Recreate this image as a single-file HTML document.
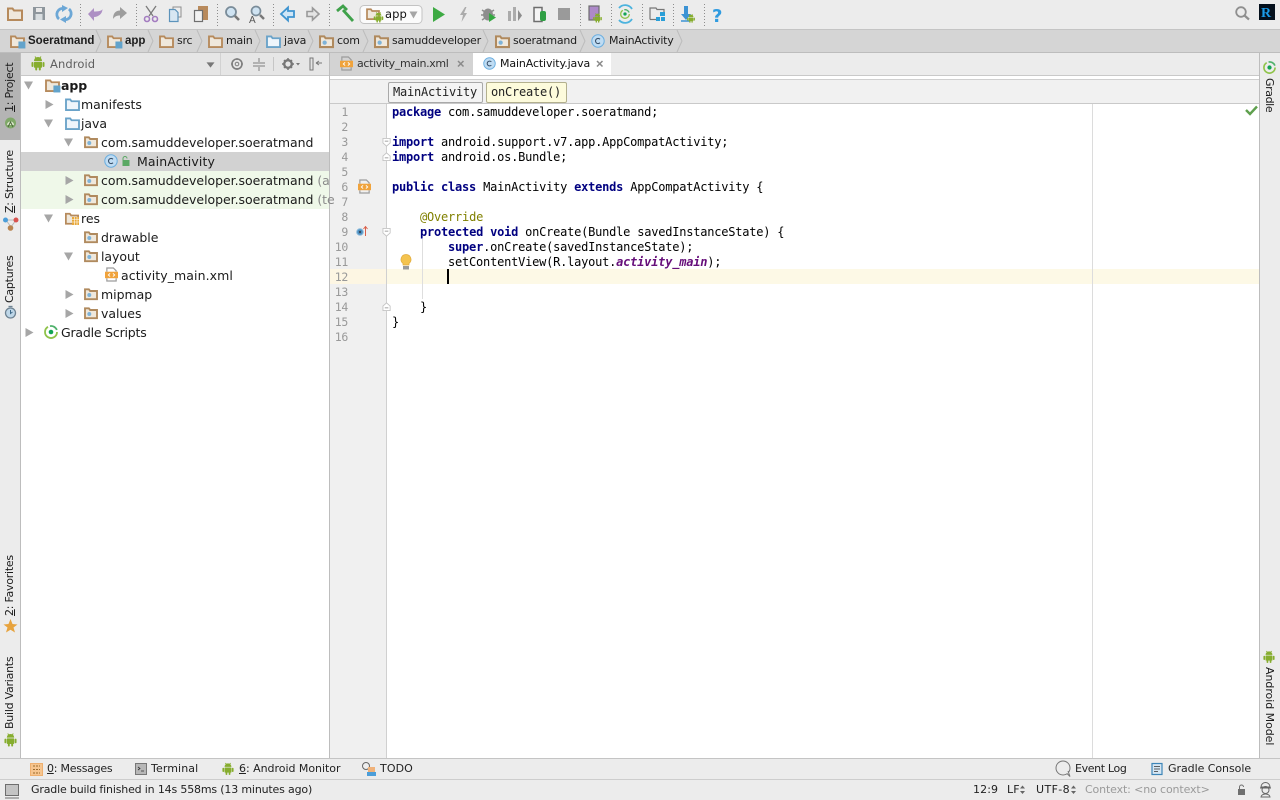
<!DOCTYPE html>
<html><head><meta charset="utf-8"><style>
html,body{margin:0;padding:0;width:1280px;height:800px;overflow:hidden;background:#fff}
body{position:relative;font-family:"DejaVu Sans","Liberation Sans",sans-serif;font-size:12px;color:#222}
.b{position:absolute}
.t{position:absolute;white-space:pre;line-height:16px;height:16px;letter-spacing:.1px}
.n{font-size:11px;letter-spacing:-.24px;color:#1d1d1d;top:33px}
.nb{font-family:"Liberation Sans",sans-serif;font-size:11.5px;letter-spacing:0;font-weight:bold}
.r{font-size:12.5px;letter-spacing:-.04px;color:#1b1b1b}
.u{text-decoration:underline}
.c{position:absolute;left:392px;font-family:"DejaVu Sans Mono",monospace;font-size:12px;letter-spacing:-.22px;line-height:15px;height:15px;white-space:pre;color:#000}
.c b{color:#000080}
.l{position:absolute;width:18px;left:330px;text-align:right;font-family:"DejaVu Sans Mono",monospace;font-size:11.5px;letter-spacing:-.3px;line-height:15px;color:#999}
.v{position:absolute;white-space:pre;font-size:11px;letter-spacing:-.25px;line-height:14px;color:#1b1b1b;transform-origin:0 0}
.vl{transform:rotate(-90deg)}
.vr{transform:rotate(90deg)}
.s{font-size:11px;color:#222;top:782px}
.bt{font-size:11px;color:#222;top:761px}
svg{position:absolute;left:0;top:0}
</style></head><body>
<div class="b" style="left:0;top:0;width:1280px;height:29px;background:#ececec"></div>
<div class="b" style="left:0;top:29px;width:1280px;height:1px;background:#c4c4c4"></div>
<div class="b" style="left:0;top:30px;width:1280px;height:22px;background:#d5d5d5"></div>
<div class="b" style="left:0;top:52px;width:1280px;height:1px;background:#bdbdbd"></div>
<!-- left strip -->
<div class="b" style="left:0;top:53px;width:20px;height:705px;background:#ececec"></div>
<div class="b" style="left:0;top:53px;width:20px;height:87px;background:#b4b4b4"></div>
<div class="b" style="left:20px;top:53px;width:1px;height:705px;background:#bdbdbd"></div>
<!-- project header -->
<div class="b" style="left:21px;top:53px;width:309px;height:22px;background:#e6e6e6"></div>
<div class="b" style="left:21px;top:75px;width:309px;height:1px;background:#c8c8c8"></div>
<div class="b" style="left:220px;top:53px;width:1px;height:22px;background:#d2d2d2"></div>
<div class="b" style="left:273px;top:57px;width:1px;height:14px;background:#c6c6c6"></div>
<!-- tree highlights -->
<div class="b" style="left:21px;top:152px;width:309px;height:19px;background:#d2d2d2"></div>
<div class="b" style="left:21px;top:171px;width:309px;height:38px;background:#eff8e9"></div>
<div class="b" style="left:329px;top:53px;width:1px;height:705px;background:#bdbdbd"></div>
<!-- tabs -->
<div class="b" style="left:330px;top:53px;width:930px;height:22px;background:#ececec"></div>
<div class="b" style="left:330px;top:53px;width:143px;height:22px;background:#d3d3d3"></div>
<div class="b" style="left:473px;top:53px;width:138px;height:23px;background:#fff"></div>
<div class="b" style="left:330px;top:75px;width:930px;height:1px;background:#c9c9c9"></div>
<div class="b" style="left:330px;top:76px;width:930px;height:3px;background:#fff"></div>
<div class="b" style="left:330px;top:79px;width:930px;height:1px;background:#cfcfcf"></div>
<div class="b" style="left:330px;top:80px;width:930px;height:23px;background:#f1f1f1"></div>
<div class="b" style="left:330px;top:103px;width:930px;height:1px;background:#c9c9c9"></div>
<!-- breadcrumbs -->
<div class="b" style="left:388px;top:82px;width:93px;height:19px;border:1px solid #a9a9a9;border-radius:2px;background:#f4f4f4"></div>
<div class="b" style="left:486px;top:82px;width:79px;height:19px;border:1px solid #b3b08e;border-radius:2px;background:#fdfbdc"></div>
<!-- gutter -->
<div class="b" style="left:330px;top:104px;width:56px;height:654px;background:#f0f0f0"></div>
<div class="b" style="left:386px;top:104px;width:1px;height:654px;background:#d0d0d0"></div>
<div class="b" style="left:330px;top:269px;width:56px;height:15px;background:#fdf6e3"></div>
<div class="b" style="left:387px;top:269px;width:872px;height:15px;background:#fdf9e6"></div>
<div class="b" style="left:1092px;top:104px;width:1px;height:654px;background:#dcdcdc"></div>
<div class="b" style="left:422px;top:239px;width:1px;height:60px;background:#dedede"></div>
<div class="b" style="left:447px;top:269px;width:2px;height:15px;background:#000"></div>
<!-- right strip -->
<div class="b" style="left:1259px;top:53px;width:1px;height:705px;background:#bdbdbd"></div>
<div class="b" style="left:1260px;top:53px;width:20px;height:705px;background:#ececec"></div>
<!-- bottom -->
<div class="b" style="left:0;top:758px;width:1280px;height:1px;background:#c4c4c4"></div>
<div class="b" style="left:0;top:759px;width:1280px;height:21px;background:#ececec"></div>
<div class="b" style="left:0;top:779px;width:1280px;height:1px;background:#cdcdcd"></div>
<div class="b" style="left:0;top:780px;width:1280px;height:20px;background:#ececec"></div>
<div class="b" style="left:30px;top:763px;width:13px;height:13px;background:#f6c58f;border:1px solid #eeb070;box-sizing:border-box"></div>

<svg width="1280" height="800" viewBox="0 0 1280 800" xmlns="http://www.w3.org/2000/svg">
<defs>
<symbol id="fo" viewBox="0 0 16 14" overflow="visible"><path d="M1 2V13H15V3.500H7L5.500 1.500H1Z" fill="#efe8dc" stroke="#b68a5c" stroke-width="2"/></symbol>
<symbol id="bl" viewBox="0 0 16 14" overflow="visible"><path d="M1 2V13H15V3.500H7L5.500 1.500H1Z" fill="#eef5fb" stroke="#6aa3c9" stroke-width="2"/></symbol>
<symbol id="pk" viewBox="0 0 16 14" overflow="visible"><path d="M1 2V13H15V3.500H7L5.500 1.500H1Z" fill="#efe8dc" stroke="#b08a5e" stroke-width="2.200"/><circle cx="6" cy="8.200" r="2.300" fill="#7eb3d8"/></symbol>
<symbol id="mo" viewBox="0 0 16 14" overflow="visible"><path d="M1 2V13H15V3.500H7L5.500 1.500H1Z" fill="#efe8dc" stroke="#b68a5c" stroke-width="2"/><rect x="9" y="7" width="7.500" height="7.500" fill="#62a3cb"/></symbol>
<symbol id="an" viewBox="0 0 14 15" overflow="visible"><g fill="#86ad2e"><path d="M3 5a4 4 0 0 1 8 0Z"/><rect x="3" y="5.800" width="8" height="6" rx=".8"/><rect x=".5" y="6" width="2" height="5" rx="1"/><rect x="11.500" y="6" width="2" height="5" rx="1"/><rect x="4.200" y="11" width="2" height="3.500" rx="1"/><rect x="7.800" y="11" width="2" height="3.500" rx="1"/></g><path d="M4 .5 5 2M10 .5 9 2" stroke="#86ad2e"/></symbol>
<symbol id="cl" viewBox="0 0 14 14" overflow="visible"><circle cx="7" cy="7" r="6.200" fill="#bfdcf3" stroke="#6aaee0"/><path d="M9 5.200A2.600 2.600 0 1 0 9 8.800" fill="none" stroke="#39506a" stroke-width="1.100"/></symbol>
<symbol id="xm" viewBox="0 0 14 16" overflow="visible"><path d="M2 5V1H9L12 4V5M2 12V15H12V12" fill="none" stroke="#9c9c9c" stroke-width="1.300"/><rect x="0" y="5" width="14" height="7" fill="#f0a33c"/><path d="M5.500 6.800 3.600 8.500 5.500 10.200M8.500 6.800 10.400 8.500 8.500 10.200" stroke="#fff" fill="none" stroke-width="1"/></symbol>
<symbol id="gr" viewBox="0 0 14 14" overflow="visible"><path d="M4 1.800A6 6 0 1 0 13 7" fill="none" stroke="#8fc34a" stroke-width="1.800"/><path d="M6 1.100A6 6 0 0 1 12.800 5" fill="none" stroke="#4fb16b" stroke-width="1.800"/><circle cx="7" cy="7" r="2.300" fill="#12a454"/></symbol>
<symbol id="dw" viewBox="0 0 9 9" overflow="visible"><path d="M0 .5H9L4.500 8.500Z" fill="#a6a6a6"/></symbol>
<symbol id="rt" viewBox="0 0 9 9" overflow="visible"><path d="M.5 0V9L8.500 4.500Z" fill="#a6a6a6"/></symbol>
<symbol id="dk" viewBox="0 0 9 9" overflow="visible"><path d="M0 1.500H9L4.500 7.500Z" fill="#777"/></symbol>
<symbol id="fd" viewBox="0 0 10 10" overflow="visible"><path d="M.5.5H8.500V5.500L4.500 9 .5 5.500Z" fill="#fff" stroke="#c4c4c4"/><path d="M2.500 3.500H6.500" stroke="#999"/></symbol>
<symbol id="fu" viewBox="0 0 10 10" overflow="visible"><path d="M.5 9.500H8.500V4.500L4.500 1 .5 4.500Z" fill="#fff" stroke="#c4c4c4"/><path d="M2.500 6.500H6.500" stroke="#999"/></symbol>
</defs>

<!-- separators -->
<g stroke="#8d8d8d" stroke-dasharray="1 2"><path d="M80.500 4V26M136.500 4V26M217.500 4V26M273.500 4V26M329.500 4V26M580.500 4V26M611.500 4V26M642.500 4V26M673.500 4V26M704.500 4V26"/></g>

<!-- toolbar icons -->
<use href="#fo" x="7" y="7" width="16" height="14"/>
<path d="M33 7H45V20H33Z" fill="#8e969c"/><rect x="36" y="8" width="6" height="4" fill="#e8e8e8"/><rect x="35.500" y="14" width="7" height="6" fill="#d8dde0"/>
<g fill="none" stroke="#6ca7d6" stroke-width="2.800"><path d="M59 19A6 6 0 0 1 64 8.500"/><path d="M69 9A6 6 0 0 1 64 19.500"/></g><path d="M62 5 68 8 62 12ZM66 16 60 19.500 66 23Z" fill="#6ca7d6"/>
<path d="M88 14 94 8V11.500C98 11.500 102 11 102.500 9 102.500 14 98 17 94 17V21Z" fill="#ad8fc4"/>
<path d="M127 13 120 7V10.500C116 10.500 113 13 113 19 115 16 117 15.500 120 15.500V19Z" fill="#9d9d9d"/>
<g fill="none" stroke="#7b7b7b" stroke-width="1.300"><path d="M146 6 153 16M156 6 149 16"/></g><g fill="none" stroke="#a37cc0" stroke-width="1.600"><circle cx="147" cy="19" r="2.500"/><circle cx="155" cy="19" r="2.500"/></g>
<rect x="173" y="7" width="8" height="10" fill="#eee" stroke="#8e8e8e"/><path d="M169.500 9.500H175L178 12.500V21.500H169.500Z" fill="#d8e7f2" stroke="#5c93bb" stroke-width="1.200"/>
<rect x="198" y="6" width="10" height="14" fill="#b88a5c"/><rect x="194.500" y="10.500" width="8" height="11" fill="#f2f2f2" stroke="#6f6f6f" stroke-width="1.200"/>
<circle cx="231" cy="12" r="5" fill="#cfe3f2" stroke="#7a8c99" stroke-width="1.800"/><path d="M235 16 239 20" stroke="#777" stroke-width="2.600"/>
<circle cx="256" cy="11" r="4.500" fill="#cfe3f2" stroke="#7a8c99" stroke-width="1.700"/><path d="M260 15 264 19" stroke="#777" stroke-width="2.400"/><text x="249" y="23" font-family="Liberation Sans,sans-serif" font-size="10" fill="#555">A</text>
<path d="M281 14 288 7.500V11H294V17H288V20.500Z" fill="#cfe6f7" stroke="#3e94d0" stroke-width="1.800"/>
<path d="M319 14 312.500 8V11.500H307V16.500H312.500V20Z" fill="#e4e4e4" stroke="#9a9a9a" stroke-width="1.600"/>
<path d="M343 10 353 21" stroke="#3fa14a" stroke-width="2.800"/><path d="M337 11 343 6 347 10" stroke="#3fa14a" stroke-width="2.800" fill="none"/>
<!-- config -->
<rect x="360" y="5.500" width="62" height="18" rx="4" fill="#fbfbfb" stroke="#c3c3c3"/>
<use href="#fo" x="366" y="8" width="14" height="12"/><use href="#an" x="373" y="12" width="11" height="11"/>
<use href="#dw" x="409" y="11" width="9" height="8"/>
<path d="M433 7V22L445 14.500Z" fill="#3daa43"/>
<path d="M465 7 460 15H463L461.500 22 467 13H464L466.500 7Z" fill="#ababab"/>
<ellipse cx="488" cy="14.500" rx="5" ry="6" fill="#8d8d8d"/><path d="M482 10 485 12M494 10 491 12M481 15H485M495 15H491M482 20 485 18" stroke="#8d8d8d" stroke-width="1.500"/><path d="M489 13V22L496 17.500Z" fill="#35a842"/>
<rect x="508" y="11" width="3" height="10" fill="#ababab"/><rect x="513" y="7" width="3" height="14" fill="#ababab"/><path d="M518 10V21L522 15.500Z" fill="#8d8d8d"/>
<path d="M534 7.500H542V21.500H534Z" fill="#f5f5f5" stroke="#6e6e6e" stroke-width="1.500"/><rect x="540" y="11" width="6" height="10" rx="2" fill="#2f9f44"/>
<rect x="558" y="8" width="12" height="12" fill="#9a9a9a"/>
<rect x="589" y="6" width="10" height="14" fill="#ad89c9" stroke="#6d6d6d" stroke-width="1.200"/><use href="#an" x="592" y="13" width="11" height="10"/>
<path d="M619 8A8 8 0 0 1 632 9M619 20A8 8 0 0 0 632 19" fill="none" stroke="#4cb3de" stroke-width="1.800"/><use href="#gr" x="620" y="9" width="10" height="10"/>
<path d="M650 19.500V8H656L657 9.500H664V12" fill="none" stroke="#777" stroke-width="1.200"/><path d="M650 19.500H657" stroke="#777" stroke-width="1.200"/><rect x="660" y="12" width="5" height="4" fill="#2a9fd8"/><rect x="656" y="17" width="4" height="4" fill="#2a9fd8"/><rect x="661" y="17" width="4" height="4" fill="#2a9fd8"/>
<path d="M684 6H688V14H691L686 20 681 14H684Z" fill="#3c93d4"/><path d="M681 21H690" stroke="#3c93d4" stroke-width="1.500"/><use href="#an" x="686" y="14" width="10" height="9"/>
<text x="712" y="22" font-family="DejaVu Sans,sans-serif" font-weight="bold" font-size="18" fill="#2f9be0">?</text>
<circle cx="1241" cy="12" r="4.800" fill="none" stroke="#8f8f8f" stroke-width="1.800"/><path d="M1244.500 15.500 1249 19.500" stroke="#8f8f8f" stroke-width="2.200"/>
<rect x="1259" y="4" width="16" height="16" fill="#04101c"/><text x="1261" y="17" font-family="Liberation Serif,serif" font-weight="bold" font-size="14" fill="#1a9be8">R</text>

<!-- nav bar icons -->
<g><use href="#mo" x="10" y="35" width="15" height="13"/><use href="#mo" x="107" y="35" width="15" height="13"/><use href="#fo" x="159" y="35" width="15" height="13"/><use href="#fo" x="208" y="35" width="15" height="13"/><use href="#bl" x="266" y="35" width="15" height="13"/><use href="#pk" x="319" y="35" width="15" height="13"/><use href="#pk" x="374" y="35" width="15" height="13"/><use href="#pk" x="495" y="35" width="15" height="13"/><use href="#cl" x="591" y="34" width="14" height="14"/></g>
<g fill="none" stroke="#bcbcbc"><path d="M96 30 101 41 96 52M148 30 153 41 148 52M197 30 202 41 197 52M255 30 260 41 255 52M308 30 313 41 308 52M363 30 368 41 363 52M483 30 488 41 483 52M580 30 585 41 580 52M677 30 682 41 677 52"/></g>

<!-- project header icons -->
<use href="#an" x="31" y="56" width="14" height="15"/>
<use href="#dk" x="206" y="61" width="9" height="8"/>
<circle cx="237" cy="64" r="5" fill="none" stroke="#7e7e7e" stroke-width="1.600"/><circle cx="237" cy="64" r="1.800" fill="none" stroke="#7e7e7e"/><path d="M237 58V60M237 68V70M231 64H233M241 64H243" stroke="#7e7e7e"/>
<path d="M253 63H265M253 66H265M259 58V62M259 67V71" stroke="#7e7e7e"/>
<circle cx="288" cy="64" r="3.800" fill="none" stroke="#777" stroke-width="2.400"/><path d="M288 58V60M288 68V70M282 64H284M292 64H294M284 60 285.500 61.500M292 60 290.500 61.500M284 68 285.500 66.500M292 68 290.500 66.500" stroke="#777" stroke-width="1.500"/><path d="M296 63H300L298 65.500Z" fill="#777"/>
<rect x="310" y="58" width="3" height="12" fill="#e4e4e4" stroke="#777"/><path d="M316 63H322M316 63 319 61M316 63 319 65" stroke="#777" fill="none"/>

<!-- left strip icons -->
<circle cx="10.500" cy="123" r="5.500" fill="#7fa868"/><path d="M7 125a3.500 3.500 0 0 1 7 0Z" fill="#dfe9d0"/><path d="M8 127 10.500 122 13 127" stroke="#4c6a3c" fill="none"/>
<path d="M6 220 11 227 16 220Z" fill="none" stroke="#b9b9b9"/><circle cx="5.500" cy="220" r="2.500" fill="#4c9ed9"/><circle cx="16" cy="220" r="2.500" fill="#d9534f"/><circle cx="10.500" cy="228" r="2.800" fill="#b8844f"/>
<circle cx="10.500" cy="313" r="5" fill="#bfd7e8" stroke="#6d8292" stroke-width="1.300"/><path d="M10.500 310V313.500L12.500 312" stroke="#3f6a8a" fill="none"/><path d="M8.500 306.500H12.500" stroke="#6d8292" stroke-width="1.300"/>
<path d="M10.500 619 12.500 624 17.500 624.500 13.500 627.500 15 632.500 10.500 629.700 6 632.500 7.500 627.500 3.500 624.500 8.500 624Z" fill="#e7a33e"/>
<use href="#an" x="4" y="733" width="13" height="14"/>

<!-- tree arrows -->
<use href="#dw" x="24" y="81" width="9" height="9"/>
<use href="#rt" x="45" y="100" width="9" height="9"/>
<use href="#dw" x="44" y="119" width="9" height="9"/>
<use href="#dw" x="64" y="138" width="9" height="9"/>
<use href="#rt" x="65" y="176" width="9" height="9"/>
<use href="#rt" x="65" y="195" width="9" height="9"/>
<use href="#dw" x="44" y="214" width="9" height="9"/>
<use href="#dw" x="64" y="252" width="9" height="9"/>
<use href="#rt" x="65" y="290" width="9" height="9"/>
<use href="#rt" x="65" y="309" width="9" height="9"/>
<use href="#rt" x="25" y="328" width="9" height="9"/>
<!-- tree icons -->
<use href="#mo" x="45" y="79" width="15" height="13"/>
<use href="#bl" x="65" y="98" width="15" height="13"/>
<use href="#bl" x="65" y="117" width="15" height="13"/>
<use href="#pk" x="84" y="136" width="14" height="12"/>
<use href="#cl" x="104" y="154" width="14" height="14"/>
<path d="M123 160V158.500A2 2 0 0 1 127 158.500" fill="none" stroke="#5aa864"/><rect x="122.500" y="160" width="7" height="6" fill="#5aa864"/>
<use href="#pk" x="84" y="174" width="14" height="12"/>
<use href="#pk" x="84" y="193" width="14" height="12"/>
<use href="#fo" x="65" y="212" width="14" height="13"/><rect x="72" y="217" width="7" height="8" fill="#e8a93a"/><path d="M72 219.500H79M72 222H79M74.500 217V225M77 217V225" stroke="#fff" stroke-width=".6"/>
<use href="#pk" x="84" y="231" width="14" height="12"/>
<use href="#pk" x="84" y="250" width="14" height="12"/>
<use href="#xm" x="105" y="267" width="13" height="15"/>
<use href="#pk" x="84" y="288" width="14" height="12"/>
<use href="#pk" x="84" y="307" width="14" height="12"/>
<use href="#gr" x="44" y="325" width="14" height="14"/>
<!-- tab icons -->
<use href="#xm" x="340" y="56" width="13" height="15"/>
<use href="#cl" x="483" y="57" width="13" height="13"/>
<g stroke="#8a8a8a" stroke-width="1.500"><path d="M458 61 463.500 66.500M463.500 61 458 66.500M597 61 602.500 66.500M602.500 61 597 66.500"/></g>
<!-- gutter icons -->
<use href="#xm" x="358" y="179" width="13" height="15"/>
<circle cx="360" cy="232" r="3.300" fill="#4f92c4" stroke="#8dbbdc"/><circle cx="360" cy="232" r="1.200" fill="#34495e"/><path d="M365.500 236V227M363.500 229 365.500 226.500 367.500 229" stroke="#d9604a" fill="none"/>
<use href="#fd" x="382" y="138" width="10" height="9"/><use href="#fu" x="382" y="152" width="10" height="9"/>
<use href="#fd" x="382" y="228" width="10" height="9"/><use href="#fu" x="382" y="302" width="10" height="9"/>
<path d="M406 254.500A5 5 0 0 1 409 263.500V265H403V263.500A5 5 0 0 1 406 254.500Z" fill="#f4c34e" stroke="#e0a93a" stroke-width=".7"/><rect x="403" y="266" width="6" height="3.500" fill="#9a9a9a"/>
<path d="M1246 110 1250 114 1257 106.500" fill="none" stroke="#5fa04e" stroke-width="2.400"/>
<!-- right strip icons -->
<use href="#gr" x="1263" y="61" width="13" height="13"/>
<use href="#an" x="1263" y="650" width="12" height="14"/>
<!-- bottom icons -->
<path d="M33 766H40M33 769.500H40M33 773H40" stroke="#9b6a2e" stroke-dasharray="2 1"/>
<rect x="135.500" y="763.500" width="11" height="11" fill="#b7b7b7" stroke="#777"/><path d="M138 767 140 768.500 138 770M141 771H144" stroke="#333" fill="none" stroke-width=".8"/>
<use href="#an" x="222" y="762" width="12" height="14"/>
<circle cx="366" cy="766" r="3.500" fill="#eee" stroke="#666"/><rect x="368" y="767" width="7" height="5" fill="#f0b27a"/><rect x="367" y="772" width="9" height="4" fill="#4c9ed9"/>
<circle cx="1063" cy="768" r="7" fill="#ececec" stroke="#777"/><path d="M1067 773.500 1070 776.500 1068 771" fill="#ececec" stroke="#777"/>
<rect x="1152" y="763.500" width="10" height="11" fill="#d5e6f3" stroke="#3d85b8" stroke-width="1.200"/><path d="M1154 766.500H1160M1154 769H1160M1154 771.500H1158" stroke="#333" stroke-width=".8"/>
<!-- status icons -->
<rect x="5.500" y="784.500" width="13" height="11" fill="#c4c4c4" stroke="#6e6e6e"/><path d="M5 798H19" stroke="#6e6e6e"/>
<rect x="1238" y="789" width="7" height="6" fill="#6f6f6f"/><path d="M1239.500 789V787A2 2 0 0 1 1243.500 787" stroke="#6f6f6f" fill="none"/>
<g fill="none" stroke="#666"><path d="M1261 787A4.500 4.500 0 0 1 1270 787ZM1260 788H1271"/><circle cx="1265.500" cy="790" r="3.500"/><path d="M1261 797A4.500 3 0 0 1 1270 797Z"/></g>
<g fill="#666"><path d="M1020 788.500 1022.500 785.500 1025 788.500ZM1020 791 1022.500 794 1025 791Z"/><path d="M1071 788.500 1073.500 785.500 1076 788.500ZM1071 791 1073.500 794 1076 791Z"/></g>
</svg>

<!-- toolbar text -->
<div class="t" style="left:385px;top:6px;font-size:11.5px;color:#111">app</div>
<!-- nav -->
<div class="t n nb" style="left:28px">Soeratmand</div>
<div class="t n nb" style="left:125px">app</div>
<div class="t n" style="left:177px">src</div>
<div class="t n" style="left:226px">main</div>
<div class="t n" style="left:284px">java</div>
<div class="t n" style="left:337px">com</div>
<div class="t n" style="left:392px">samuddeveloper</div>
<div class="t n" style="left:513px">soeratmand</div>
<div class="t n" style="left:609px">MainActivity</div>
<!-- header -->
<div class="t" style="left:50px;top:56px;font-size:11.5px;color:#5f5f5f">Android</div>
<!-- tabs -->
<div class="t" style="left:357px;top:56px;font-size:11px;letter-spacing:-.34px;color:#333">activity_main.xml</div>
<div class="t" style="left:500px;top:56px;font-size:11px;letter-spacing:-.13px;color:#111">MainActivity.java</div>
<!-- tree -->
<div class="t r" style="left:61px;top:78px;font-weight:bold">app</div>
<div class="t r" style="left:81px;top:97px">manifests</div>
<div class="t r" style="left:81px;top:116px">java</div>
<div class="t r" style="left:101px;top:135px">com.samuddeveloper.soeratmand</div>
<div class="t r" style="left:137px;top:154px;letter-spacing:.12px">MainActivity</div>
<div class="t r" style="left:101px;top:173px">com.samuddeveloper.soeratmand <span style="color:#8a8a8a">(a</span></div>
<div class="t r" style="left:101px;top:192px">com.samuddeveloper.soeratmand <span style="color:#8a8a8a">(te</span></div>
<div class="t r" style="left:81px;top:211px">res</div>
<div class="t r" style="left:101px;top:230px">drawable</div>
<div class="t r" style="left:101px;top:249px">layout</div>
<div class="t r" style="left:121px;top:268px;letter-spacing:.08px">activity_main.xml</div>
<div class="t r" style="left:101px;top:287px">mipmap</div>
<div class="t r" style="left:101px;top:306px">values</div>
<div class="t r" style="left:61px;top:325px;letter-spacing:-.2px">Gradle Scripts</div>
<!-- breadcrumb text -->
<div class="c" style="left:393px;top:85px;color:#222">MainActivity</div>
<div class="c" style="left:491px;top:85px;color:#222">onCreate()</div>
<!-- line numbers -->
<div class="l" style="top:105px">1</div><div class="l" style="top:120px">2</div><div class="l" style="top:135px">3</div><div class="l" style="top:150px">4</div><div class="l" style="top:165px">5</div><div class="l" style="top:180px">6</div><div class="l" style="top:195px">7</div><div class="l" style="top:210px">8</div><div class="l" style="top:225px">9</div><div class="l" style="top:240px">10</div><div class="l" style="top:255px">11</div><div class="l" style="top:270px">12</div><div class="l" style="top:285px">13</div><div class="l" style="top:300px">14</div><div class="l" style="top:315px">15</div><div class="l" style="top:330px">16</div>
<!-- code -->
<div class="c" style="top:105px"><b>package</b> com.samuddeveloper.soeratmand;</div>
<div class="c" style="top:135px"><b>import</b> android.support.v7.app.AppCompatActivity;</div>
<div class="c" style="top:150px"><b>import</b> android.os.Bundle;</div>
<div class="c" style="top:180px"><b>public class</b> MainActivity <b>extends</b> AppCompatActivity {</div>
<div class="c" style="top:210px">    <span style="color:#808000">@Override</span></div>
<div class="c" style="top:225px">    <b>protected void</b> onCreate(Bundle savedInstanceState) {</div>
<div class="c" style="top:240px">        <b>super</b>.onCreate(savedInstanceState);</div>
<div class="c" style="top:255px">        setContentView(R.layout.<b style="color:#660e7a;font-style:italic">activity_main</b>);</div>
<div class="c" style="top:300px">    }</div>
<div class="c" style="top:315px">}</div>
<!-- vertical left -->
<div class="v vl" style="left:3px;top:112px"><span class="u">1</span>: Project</div>
<div class="v vl" style="left:3px;top:213px"><span class="u">Z</span>: Structure</div>
<div class="v vl" style="left:3px;top:303px">Captures</div>
<div class="v vl" style="left:3px;top:616px"><span class="u">2</span>: Favorites</div>
<div class="v vl" style="left:3px;top:729px">Build Variants</div>
<!-- vertical right -->
<div class="v vr" style="left:1276px;top:78px;letter-spacing:-.4px">Gradle</div>
<div class="v vr" style="left:1276px;top:667px;letter-spacing:-.05px">Android Model</div>
<!-- bottom bar -->
<div class="t bt" style="left:47px;letter-spacing:-.25px"><span class="u">0</span>: Messages</div>
<div class="t bt" style="left:151px">Terminal</div>
<div class="t bt" style="left:239px;letter-spacing:-.03px"><span class="u">6</span>: Android Monitor</div>
<div class="t bt" style="left:380px">TODO</div>
<div class="t bt" style="left:1075px;letter-spacing:-.35px">Event Log</div>
<div class="t bt" style="left:1168px;letter-spacing:-.05px">Gradle Console</div>
<!-- status -->
<div class="t s" style="left:31px;letter-spacing:-.17px">Gradle build finished in 14s 558ms (13 minutes ago)</div>
<div class="t s" style="left:973px">12:9</div>
<div class="t s" style="left:1007px">LF</div>
<div class="t s" style="left:1036px;letter-spacing:.4px">UTF-8</div>
<div class="t s" style="left:1085px;letter-spacing:-.13px;color:#9a9a9a">Context: &lt;no context&gt;</div>
</body></html>
